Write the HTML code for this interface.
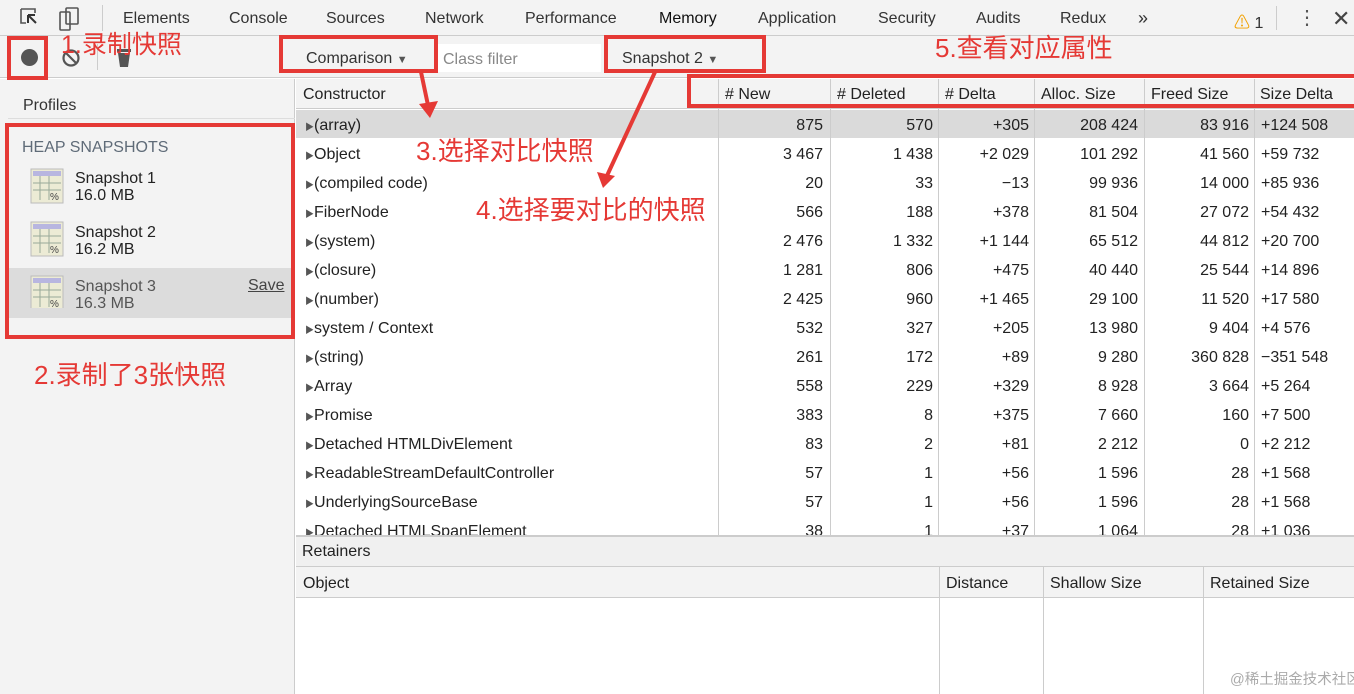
<!DOCTYPE html>
<html><head><meta charset="utf-8"><style>
*{margin:0;padding:0;box-sizing:border-box}
body{width:1354px;height:694px;overflow:hidden;background:#fff;font-family:"Liberation Sans","Noto Sans CJK SC",sans-serif;color:#222;position:relative;font-size:16px}
.a{position:absolute;white-space:nowrap}
.r{text-align:right}
.ann{color:#e53935;font-size:26px}
</style></head><body>
<div class="a" style="left:0;top:0;width:1354px;height:36px;background:#f3f3f3;border-bottom:1px solid #ccc"></div>
<div class="a" style="left:0;top:36px;width:1354px;height:42px;background:#f3f3f3;border-bottom:1px solid #ccc"></div>
<svg class="a" style="left:18px;top:6px" width="70" height="26"><path d="M3 3h14v4M3 3v14h5" stroke="#555" fill="none" stroke-width="1.6"/><path d="M10 9l8 8M10 9v8M10 9h7" stroke="#333" stroke-width="2"/><rect x="42" y="6" width="10" height="18" rx="1" stroke="#555" fill="none" stroke-width="1.6"/><rect x="48" y="2" width="12" height="16" rx="1" stroke="#555" fill="none" stroke-width="1.6"/></svg>
<div class="a" style="left:102px;top:5px;width:1px;height:26px;background:#ccc"></div>
<div class="a" style="left:123px;top:10px;color:#333">Elements</div>
<div class="a" style="left:229px;top:10px;color:#333">Console</div>
<div class="a" style="left:326px;top:10px;color:#333">Sources</div>
<div class="a" style="left:425px;top:10px;color:#333">Network</div>
<div class="a" style="left:525px;top:10px;color:#333">Performance</div>
<div class="a" style="left:659px;top:10px;color:#111">Memory</div>
<div class="a" style="left:758px;top:10px;color:#333">Application</div>
<div class="a" style="left:878px;top:10px;color:#333">Security</div>
<div class="a" style="left:976px;top:10px;color:#333">Audits</div>
<div class="a" style="left:1060px;top:10px;color:#333">Redux</div>
<div class="a" style="left:1138px;top:8px;color:#333;font-size:18px">»</div>
<div class="a" style="left:1234px;top:9px;color:#f2a100;font-size:16px">⚠<span style="color:#333"> 1</span></div>
<div class="a" style="left:1276px;top:6px;width:1px;height:24px;background:#ccc"></div>
<div class="a" style="left:1297px;top:6px;color:#555;font-size:20px;line-height:24px">⋮</div>
<div class="a" style="left:1332px;top:6px;color:#444;font-size:22px">✕</div>
<div class="a" style="left:21px;top:49px;width:17px;height:17px;border-radius:50%;background:#555"></div>
<svg class="a" style="left:61px;top:48px" width="20" height="20"><circle cx="10" cy="10" r="7.5" stroke="#555" stroke-width="2.2" fill="none"/><line x1="5" y1="5" x2="15" y2="15" stroke="#555" stroke-width="2.2"/></svg>
<div class="a" style="left:97px;top:44px;width:1px;height:26px;background:#ccc"></div>
<svg class="a" style="left:115px;top:47px" width="18" height="22"><rect x="2" y="2" width="14" height="3" fill="#555"/><path d="M3 6h12l-2 14H5z" fill="#555"/></svg>
<div class="a" style="left:306px;top:50px;color:#333">Comparison <span style="font-size:11px;color:#555">▼</span></div>
<div class="a" style="left:437px;top:44px;width:164px;height:28px;background:#fff"></div>
<div class="a" style="left:443px;top:51px;color:#888">Class filter</div>
<div class="a" style="left:622px;top:50px;color:#333">Snapshot 2 <span style="font-size:11px;color:#555">▼</span></div>
<div class="a" style="left:0;top:79px;width:295px;height:615px;background:#f3f3f3;border-right:1px solid #ccc"></div>
<div class="a" style="left:23px;top:97px;color:#333">Profiles</div>
<div class="a" style="left:8px;top:118px;width:287px;height:1px;background:#ddd"></div>
<div class="a" style="left:22px;top:139px;color:#5f6b78">HEAP SNAPSHOTS</div>
<div class="a" style="left:8px;top:268px;width:287px;height:50px;background:#dcdcdc"></div>
<svg class="a" style="left:30px;top:168px" width="34" height="140">
<defs><g id="ic"><rect x="1" y="1" width="32" height="34" fill="#ecebd5" stroke="#bbb"/><rect x="3" y="3" width="28" height="5" fill="#b8b6e0"/><path d="M10 8v24M19 8v24M3 15h28M3 22h28" stroke="#9a9" stroke-width="1"/><text x="20" y="32" font-size="10" fill="#444" font-family="Liberation Sans">%</text></g></defs>
<use href="#ic"/><use href="#ic" y="53"/><use href="#ic" y="107"/></svg>
<div class="a" style="left:75px;top:170px;line-height:17px;color:#222">Snapshot 1<br>16.0 MB</div>
<div class="a" style="left:75px;top:224px;line-height:17px;color:#222">Snapshot 2<br>16.2 MB</div>
<div class="a" style="left:75px;top:278px;line-height:17px;color:#555">Snapshot 3<br>16.3 MB</div>
<div class="a" style="left:248px;top:277px;color:#444;text-decoration:underline">Save</div>
<div class="a" style="left:296px;top:79px;width:1058px;height:30px;background:#f3f3f3;border-bottom:1px solid #ccc"></div>
<div class="a" style="left:303px;top:86px">Constructor</div>
<div class="a" style="left:725px;top:86px"># New</div>
<div class="a" style="left:837px;top:86px"># Deleted</div>
<div class="a" style="left:945px;top:86px"># Delta</div>
<div class="a" style="left:1041px;top:86px">Alloc. Size</div>
<div class="a" style="left:1151px;top:86px">Freed Size</div>
<div class="a" style="left:1260px;top:86px">Size Delta</div>
<div class="a" style="left:296px;top:110px;width:1058px;height:28px;background:#dadada"></div>
<div class="a" style="left:718px;top:79px;width:1px;height:457px;background:#ccc"></div>
<div class="a" style="left:830px;top:79px;width:1px;height:457px;background:#ccc"></div>
<div class="a" style="left:938px;top:79px;width:1px;height:457px;background:#ccc"></div>
<div class="a" style="left:1034px;top:79px;width:1px;height:457px;background:#ccc"></div>
<div class="a" style="left:1144px;top:79px;width:1px;height:457px;background:#ccc"></div>
<div class="a" style="left:1254px;top:79px;width:1px;height:457px;background:#ccc"></div>
<div id="rows"></div>
<script>
var d=[["(array)","875","570","+305","208 424","83 916","+124 508"],["Object","3 467","1 438","+2 029","101 292","41 560","+59 732"],["(compiled code)","20","33","−13","99 936","14 000","+85 936"],["FiberNode","566","188","+378","81 504","27 072","+54 432"],["(system)","2 476","1 332","+1 144","65 512","44 812","+20 700"],["(closure)","1 281","806","+475","40 440","25 544","+14 896"],["(number)","2 425","960","+1 465","29 100","11 520","+17 580"],["system / Context","532","327","+205","13 980","9 404","+4 576"],["(string)","261","172","+89","9 280","360 828","−351 548"],["Array","558","229","+329","8 928","3 664","+5 264"],["Promise","383","8","+375","7 660","160","+7 500"],["Detached HTMLDivElement","83","2","+81","2 212","0","+2 212"],["ReadableStreamDefaultController","57","1","+56","1 596","28","+1 568"],["UnderlyingSourceBase","57","1","+56","1 596","28","+1 568"],["Detached HTMLSpanElement","38","1","+37","1 064","28","+1 036"]];
var R=[823,933,1029,1138,1249];var h="";
d.forEach(function(r,i){var t=110+i*29+7;h+='<div class="a" style="left:305px;top:'+t+'px"><span style="font-size:9px;color:#555">▶</span>'+r[0]+'</div>';
for(var j=1;j<7;j++){if(j==6)h+='<div class="a" style="left:1261px;top:'+t+'px">'+r[j]+'</div>';else h+='<div class="a r" style="left:'+(R[j-1]-100)+'px;width:100px;top:'+t+'px">'+r[j]+'</div>';}});
document.getElementById('rows').innerHTML=h;
</script>
<div class="a" style="left:296px;top:535px;width:1058px;height:32px;background:#f0f0f0;border-top:2px solid #ccc;border-bottom:1px solid #ccc"></div>
<div class="a" style="left:302px;top:543px">Retainers</div>
<div class="a" style="left:296px;top:567px;width:1058px;height:31px;background:#f3f3f3;border-bottom:1px solid #ccc"></div>
<div class="a" style="left:303px;top:575px">Object</div>
<div class="a" style="left:946px;top:575px">Distance</div>
<div class="a" style="left:1050px;top:575px">Shallow Size</div>
<div class="a" style="left:1210px;top:575px">Retained Size</div>
<div class="a" style="left:296px;top:598px;width:1058px;height:96px;background:#fff"></div>
<div class="a" style="left:939px;top:567px;width:1px;height:127px;background:#ccc"></div>
<div class="a" style="left:1043px;top:567px;width:1px;height:127px;background:#ccc"></div>
<div class="a" style="left:1203px;top:567px;width:1px;height:127px;background:#ccc"></div>
<div class="a" style="left:1230px;top:668px;color:#aaa;font-size:14.5px">@稀土掘金技术社区</div>
<svg class="a" style="left:0;top:0" width="1354" height="694">
<g stroke="#e53935" stroke-width="4" fill="none">
<rect x="9" y="38" width="37" height="40"/>
<rect x="281" y="37" width="155" height="34"/>
<rect x="606" y="37" width="158" height="34"/>
<path d="M1354 76H689V106H1354"/>
<rect x="7" y="125" width="286" height="212"/>
<path d="M421 72L429 110"/>
<path d="M655 72L605 180"/>
</g>
<path d="M419 104L430 118L438 101Z" fill="#e53935"/>
<path d="M597 172L603 188L615 176Z" fill="#e53935"/>
</svg>
<div class="a ann" style="left:61px;top:25px;font-size:25px">1.录制快照</div>
<div class="a ann" style="left:34px;top:355px">2.录制了3张快照</div>
<div class="a ann" style="left:416px;top:131px">3.选择对比快照</div>
<div class="a ann" style="left:476px;top:190px">4.选择要对比的快照</div>
<div class="a ann" style="left:935px;top:28px">5.查看对应属性</div>
</body></html>
